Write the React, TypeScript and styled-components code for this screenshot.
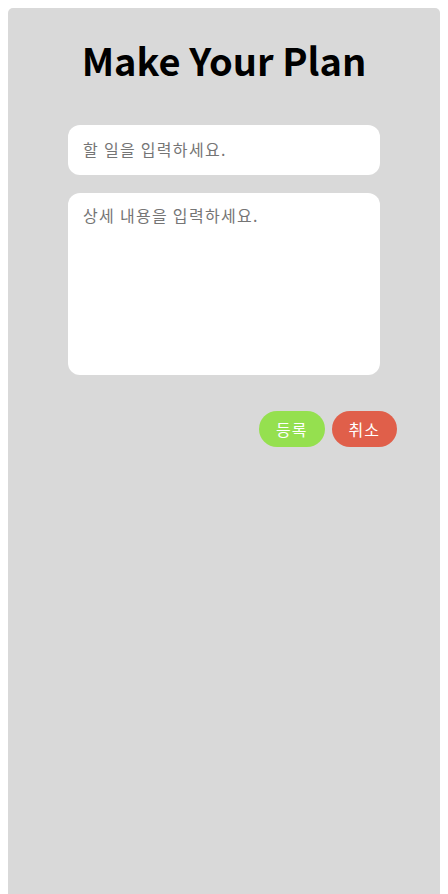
import React from "react";
import styled, { createGlobalStyle } from "styled-components";

const GlobalStyle = createGlobalStyle`
  body {
    margin: 8px;
    font-family: "Noto Sans CJK KR", "Noto Sans", sans-serif;
    background: #ffffff;
  }
`;

const Panel = styled.div`
  min-height: 886px;
  background-color: #d9d9d9;
  border-radius: 5px 5px 0 0;
  display: flex;
  flex-direction: column;
  align-items: center;
  padding-top: 26px;
  box-sizing: border-box;
`;

const Title = styled.h1`
  margin: 0 0 40px 0;
  font-size: 38px;
  font-weight: 700;
  color: #000;
  line-height: 51px;
`;

const Form = styled.div`
  width: 312px;
  display: flex;
  flex-direction: column;
  gap: 18px;
`;

const TitleInput = styled.input`
  height: 50px;
  border: none;
  border-radius: 12px;
  padding: 0 15px 2px 15px;
  font-size: 16px;
  letter-spacing: 1.3px;
  font-family: inherit;
  background: #fff;
  outline: none;
  box-sizing: border-box;
  &::placeholder {
    color: #757575;
  }
`;

const DetailInput = styled.textarea`
  height: 182px;
  border: none;
  border-radius: 12px;
  padding: 10px 15px;
  font-size: 16px;
  letter-spacing: 1.3px;
  font-family: inherit;
  background: #fff;
  resize: none;
  outline: none;
  box-sizing: border-box;
  &::placeholder {
    color: #757575;
  }
`;

const ButtonRow = styled.div`
  align-self: stretch;
  display: flex;
  justify-content: flex-end;
  gap: 7px;
  padding-right: 43px;
  margin-top: 36px;
`;

const PillButton = styled.button<{ $color: string }>`
  height: 36px;
  padding: 0 17px;
  border: none;
  border-radius: 18px;
  background-color: ${(p) => p.$color};
  color: #fff;
  font-size: 16px;
  letter-spacing: 1px;
  font-family: inherit;
  cursor: pointer;
`;

const App = (): React.ReactElement => {
  return (
    <>
      <GlobalStyle />
      <Panel>
        <Title>Make Your Plan</Title>
        <Form>
          <TitleInput type="text" placeholder="할 일을 입력하세요." />
          <DetailInput placeholder="상세 내용을 입력하세요." />
        </Form>
        <ButtonRow>
          <PillButton $color="#95e04f">등록</PillButton>
          <PillButton $color="#e05f4a">취소</PillButton>
        </ButtonRow>
      </Panel>
    </>
  );
};

export default App;
